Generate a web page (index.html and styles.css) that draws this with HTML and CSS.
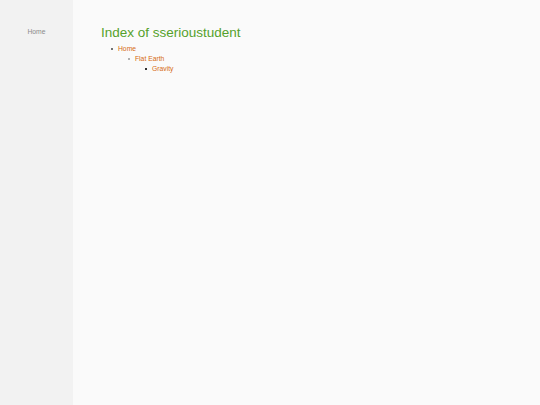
FILE: index.html
```html
<!DOCTYPE html>
<html>
<head>
<meta charset="utf-8">
<title>Index of sserioustudent</title>
<link rel="stylesheet" href="styles.css">
</head>
<body>
<div class="layout">
  <nav class="sidebar">
    <a class="side-link" href="#">Home</a>
  </nav>
  <main class="content">
    <h1 class="title">Index of sserioustudent</h1>
    <ul class="tree level1">
      <li><a href="#">Home</a>
        <ul class="tree level2">
          <li><a href="#">Flat Earth</a>
            <ul class="tree level3">
              <li><a href="#">Gravity</a></li>
            </ul>
          </li>
        </ul>
      </li>
    </ul>
  </main>
</div>
</body>
</html>
```
FILE: styles.css
```css
html, body {
  margin: 0;
  padding: 0;
  height: 100%;
}
body {
  font-family: "Liberation Sans", Arial, sans-serif;
  background: #fafafa;
}
.layout {
  display: flex;
  min-height: 405px;
}
.sidebar {
  width: 73px;
  flex: none;
  background: #f2f2f2;
  text-align: center;
  padding-top: 27px;
  box-sizing: border-box;
  font-size: 6.75px;
  line-height: 10px;
}
.side-link {
  color: #8a8a8a;
  text-decoration: none;
}
.content {
  flex: 1;
  padding: 25px 0 0 28px;
}
.title {
  margin: 0 0 3px;
  font-size: 13.5px;
  font-weight: normal;
  line-height: 15.5px;
  color: #55a12b;
}
.tree {
  margin: 0;
  padding-left: 17px;
  font-size: 6.75px;
  line-height: 10px;
  color: #333;
  list-style: none;
}
.tree li::before {
  content: "";
  display: inline-block;
  width: 2px;
  height: 2px;
  margin-left: -7px;
  margin-right: 5px;
  vertical-align: 1px;
  background: #444;
  border-radius: 50%;
}
.level2 > li::before {
  background: #999;
}
.level3 > li::before {
  border-radius: 0;
  background: #333;
}
.tree a {
  color: #d66a12;
  text-decoration: none;
}
```
